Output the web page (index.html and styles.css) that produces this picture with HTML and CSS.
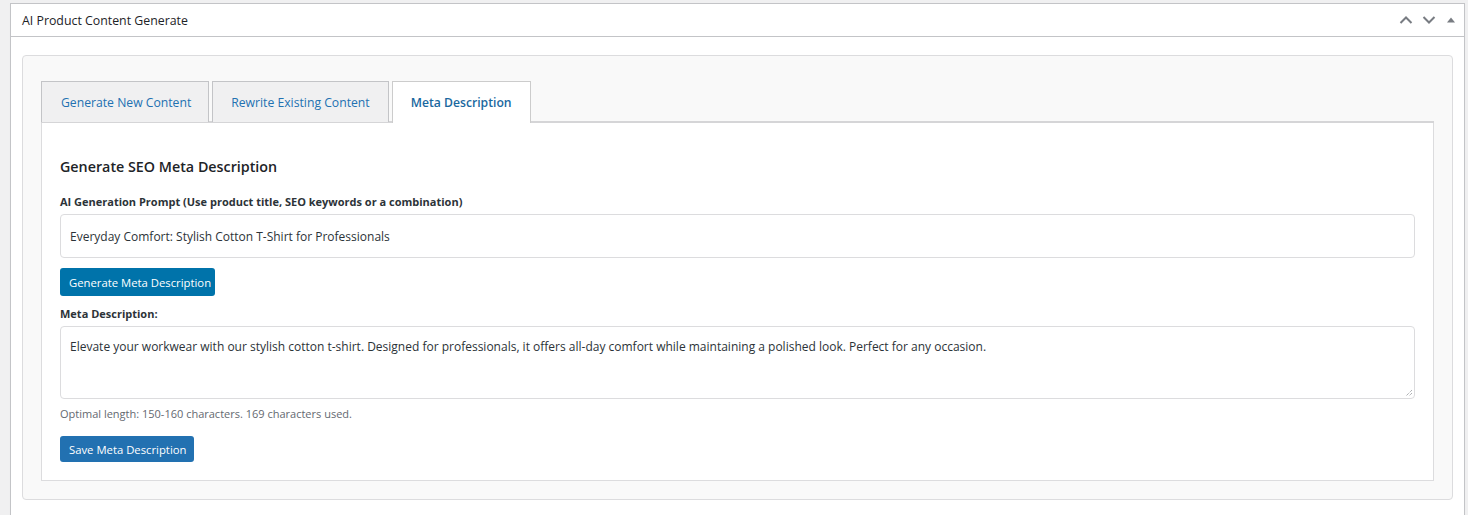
FILE: index.html
```html
<!DOCTYPE html>
<html>
<head>
<meta charset="utf-8">
<link rel="stylesheet" href="styles.css">
</head>
<body>
<div class="postbox">
  <div class="postbox-header">
    <h2 class="hndle">AI Product Content Generate</h2>
    <div class="handle-actions">
      <button class="hbtn" aria-label="Move up">
        <svg width="14" height="10" viewBox="0 0 14 10"><path d="M1.5 8 L7 2.5 L12.5 8" fill="none" stroke="#787c82" stroke-width="2"/></svg>
      </button>
      <button class="hbtn" aria-label="Move down">
        <svg width="14" height="10" viewBox="0 0 14 10"><path d="M1.5 2 L7 7.5 L12.5 2" fill="none" stroke="#787c82" stroke-width="2"/></svg>
      </button>
      <button class="hbtn small" aria-label="Toggle">
        <svg width="10" height="8" viewBox="0 0 10 8"><path d="M1 6.5 L5 1.5 L9 6.5 Z" fill="#787c82"/></svg>
      </button>
    </div>
  </div>
  <div class="inside">
    <div class="generator">
      <div class="tabs">
        <div class="tab">Generate New Content</div>
        <div class="tab">Rewrite Existing Content</div>
        <div class="tab active">Meta Description</div>
      </div>
      <div class="panel">
        <h3 class="panel-title">Generate SEO Meta Description</h3>
        <label class="field-label">AI Generation Prompt (Use product title, SEO keywords or a combination)</label>
        <div class="input">Everyday Comfort: Stylish Cotton T-Shirt for Professionals</div>
        <button class="btn btn-generate">Generate Meta Description</button>
        <label class="field-label meta-label">Meta Description:</label>
        <div class="textarea">Elevate your workwear with our stylish cotton t-shirt. Designed for professionals, it offers all-day comfort while maintaining a polished look. Perfect for any occasion.
          <svg class="grip" width="8" height="8" viewBox="0 0 8 8"><path d="M7 1 L1 7 M7 4 L4 7" stroke="#8c8f94" stroke-width="1" stroke-dasharray="1 1"/></svg>
        </div>
        <p class="help">Optimal length: 150-160 characters. 169 characters used.</p>
        <button class="btn btn-save">Save Meta Description</button>
      </div>
    </div>
  </div>
</div>
</body>
</html>
```

FILE: styles.css
```css
* { box-sizing: border-box; }
html, body { margin: 0; }
body {
  background: #f0f0f1;
  font-family: "Open Sans", "Noto Sans", sans-serif;
  color: #1d2327;
  padding: 3px 3px 0 10px;
  height: 515px;
  overflow: hidden;
}
.postbox {
  background: #fff;
  border: 1px solid #c3c4c7;
  box-shadow: 0 1px 1px rgba(0,0,0,.04);
  min-height: 520px;
}
.postbox-header {
  height: 33px;
  border-bottom: 1px solid #c3c4c7;
  display: flex;
  align-items: center;
  justify-content: space-between;
}
.hndle {
  margin: 0;
  padding-left: 11px;
  font-size: 12.35px;
  font-weight: 400;
  color: #1d2327;
}
.handle-actions {
  display: flex;
  align-items: center;
  padding-right: 2px;
}
.hbtn {
  border: 0;
  background: none;
  padding: 0;
  width: 23px;
  height: 20px;
  display: flex;
  align-items: center;
  justify-content: center;
}
.hbtn.small { width: 22px; }
.inside {
  padding: 18px 11px 0 11px;
}
.generator {
  background: #f9f9f9;
  border: 1px solid #dcdcde;
  border-radius: 4px;
  padding: 25px 18px 18px 18px;
}
.tabs {
  display: flex;
  gap: 3px;
  border-bottom: 2px solid #d5d5d7;
}
.tab {
  height: 41px;
  display: flex;
  align-items: center;
  padding: 0 18px;
  font-size: 12.2px;
  color: #2271b1;
  background: #f0f0f1;
  border: 1px solid #c3c4c7;
  border-bottom: 0;
  margin-bottom: -1px;
}
.tab:first-child { padding-left: 19px; padding-right: 17px; }
.tab.active {
  background: #fff;
  color: #1a68a0;
  font-weight: 600;
  border-color: #cccccc;
  margin-bottom: -2px;
  height: 42px;
}
.panel {
  background: #fff;
  border: 1px solid #dcdcde;
  border-top: 0;
  padding: 24px 18px 18px 18px;
  display: flex;
  flex-direction: column;
  align-items: flex-start;
}
.panel-title {
  margin: 10px 0 17px;
  font-size: 14.3px;
  font-weight: 600;
  color: #1d2327;
  line-height: 20px;
}
.field-label {
  font-size: 11px;
  font-weight: 700;
  color: #2c3338;
  line-height: 16px;
  margin-bottom: 4px;
}
.input {
  width: 100%;
  height: 44px;
  border: 1px solid #dcdcde;
  border-radius: 4px;
  padding: 0 9px;
  display: flex;
  align-items: center;
  font-size: 12px;
  color: #2c3338;
}
.btn {
  border: 0;
  border-radius: 3px;
  color: #fff;
  font-family: inherit;
  font-size: 11.3px;
  padding: 0 9px;
  white-space: nowrap;
  text-align: center;
  cursor: pointer;
}
.btn-generate {
  margin-top: 10px;
  height: 28px;
  background: #0073aa;
  width: 155px;
}
.meta-label { margin-top: 10px; margin-bottom: 4px; }
.textarea {
  position: relative;
  width: 100%;
  height: 73px;
  border: 1px solid #dcdcde;
  border-radius: 4px;
  padding: 10px 9px;
  font-size: 12px;
  line-height: 20px;
  color: #2c3338;
}
.grip { position: absolute; right: 1px; bottom: 1px; }
.help {
  margin: 7px 0 0;
  font-size: 11px;
  color: #646970;
  line-height: 16px;
}
.btn-save {
  margin-top: 14px;
  height: 26px;
  width: 134px;
  background: #2271b1;
}
```
